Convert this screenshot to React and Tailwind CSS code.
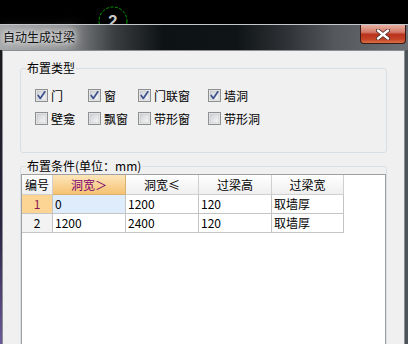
import React from "react";

const CJK = { fontFamily: '"Noto Sans CJK SC", "Noto Sans", sans-serif' };

function Check({ checked }) {
  return (
    <svg width="13" height="13" viewBox="0 0 13 13" className="shrink-0">
      <defs>
        <linearGradient id="cbg" x1="0" y1="0" x2="1" y2="1">
          <stop offset="0" stopColor="#cfd2d6" />
          <stop offset="1" stopColor="#f7f7f7" />
        </linearGradient>
      </defs>
      <rect x="0.5" y="0.5" width="12" height="12" fill="#f4f4f4" stroke="#8e8f8f" />
      <rect x="2" y="2" width="9" height="9" fill="url(#cbg)" stroke="#b8bbc0" strokeWidth="0.6" />
      {checked && (
        <path d="M3.2 6.4 L5.3 9.4 L9.8 2.8" fill="none" stroke="#3e4f8e" strokeWidth="1.7" strokeLinecap="round" strokeLinejoin="round" />
      )}
    </svg>
  );
}

function CB({ label, checked }) {
  return (
    <div className="flex items-center h-[13px]">
      <Check checked={checked} />
      <span className="ml-[3px] text-[12px] leading-[13px] text-black whitespace-nowrap" style={CJK}>
        {label}
      </span>
    </div>
  );
}

const headBase = "h-[20px] border-r border-b border-[#d0d0d0] flex items-center justify-center text-[12px] text-black bg-[linear-gradient(#ffffff,#efefef)]";
const cellBase = "h-[19px] border-r border-b border-[#c4c4c4] flex items-center text-[12px] text-black pl-[2px] whitespace-nowrap";

export default function App() {
  const rows = [
    ["1", "0", "1200", "120", "取墙厚"],
    ["2", "1200", "2400", "120", "取墙厚"],
  ];
  return (
    <div className="w-[408px] h-[344px] bg-black overflow-hidden flex flex-col" style={CJK}>
      <div className="h-[24px] shrink-0 flex">
        <svg width="140" height="24" viewBox="0 0 140 24">
          <circle cx="113" cy="21" r="14" fill="none" stroke="#00a000" strokeWidth="1" strokeDasharray="3 1.5" />
          <text x="108" y="27" fontSize="17" fill="#c8c8c8" fontFamily="Liberation Sans, sans-serif" fontWeight="bold">2</text>
        </svg>
      </div>
      <div className="flex-1 flex flex-col border-t border-[#c4c8cc] bg-[#2a2e33] min-h-0">
        <div className="h-[25px] shrink-0 flex justify-between items-start bg-[linear-gradient(to_right,#a4a6a8_0%,#8c8e90_16%,#3a3e40_28%,#0d1214_40%,#0f1416_58%,#2e3236_70%,#54585c_82%,#6c7074_100%)]">
          <span
            className="mt-[4px] ml-[3px] text-[12px] leading-[16px] text-[#101010] [text-shadow:0_0_4px_#f0f0f0,0_0_8px_#e0e0e0,0_0_12px_#d0d0d0,0_0_16px_#c8c8c8]"
            style={CJK}
          >
            自动生成过梁
          </span>
          <div className="mr-[2px] w-[46px] h-[19px] rounded-b-[4px] border border-t-0 border-[#3a1a14] flex items-center justify-center bg-[linear-gradient(#e9b0a2_0%,#d27a68_40%,#b8321c_52%,#c44426_80%,#dc7048_100%)]">
            <svg width="14" height="11" viewBox="0 0 14 11">
              <path d="M2 1.5 L12 9.5 M12 1.5 L2 9.5" stroke="#4a2a26" strokeWidth="4" strokeLinecap="round" />
              <path d="M2 1.5 L12 9.5 M12 1.5 L2 9.5" stroke="#ffffff" strokeWidth="2.4" strokeLinecap="round" />
            </svg>
          </div>
        </div>
        <div className="flex-1 flex min-h-0">
          <div className="w-[2px] shrink-0 bg-[linear-gradient(#1a1a1a,#2a2440_60%,#6a5a9a)]" />
          <div className="flex-1 bg-[#f0f0f0] border-t border-l border-r border-[#8a8e92] flex flex-col overflow-hidden">
            <div className="ml-[17px] mt-[17px] w-[367px] h-[85px] shrink-0 border border-[#d5dfe5] rounded-[3px] relative">
              <span className="absolute -top-[9px] left-[5px] px-[1px] bg-[#f0f0f0] text-[12px] leading-[16px] text-black">
                布置类型
              </span>
              <div className="pl-[14px] pt-[20px] grid grid-cols-[53px_50px_70px_auto] gap-y-[10px]">
                <CB label="门" checked />
                <CB label="窗" checked />
                <CB label="门联窗" checked />
                <CB label="墙洞" checked />
                <CB label="壁龛" />
                <CB label="飘窗" />
                <CB label="带形窗" />
                <CB label="带形洞" />
              </div>
            </div>
            <div className="ml-[17px] mt-[13px] w-[367px] h-[260px] shrink-0 border border-[#d5dfe5] rounded-[3px] relative pt-[7px]">
              <span className="absolute -top-[9px] left-[5px] px-[1px] bg-[#f0f0f0] text-[12px] leading-[16px] text-black whitespace-nowrap">
                布置条件(单位：mm)
              </span>
              <div className="w-[365px] h-[240px] bg-white border border-[#a0a0a0]">
                <div className="grid grid-cols-[31px_73px_73px_73px_72px]">
                  <div className={headBase}>编号</div>
                  <div className="h-[20px] border-r border-b border-[#d8b070] flex items-center justify-center text-[12px] text-[#800070] bg-[linear-gradient(#fde6bb,#f5c272)]">
                    洞宽＞
                  </div>
                  <div className={headBase}>洞宽≤</div>
                  <div className={headBase}>过梁高</div>
                  <div className={headBase}>过梁宽</div>
                  {rows.map((r, i) => (
                    <React.Fragment key={i}>
                      <div
                        className={
                          "h-[19px] border-r border-b border-[#c4c4c4] flex items-center justify-center text-[12px] " +
                          (i === 0 ? "bg-[#fcd594] text-[#8a1850]" : "bg-[#f3f3f3] text-black")
                        }
                      >
                        {r[0]}
                      </div>
                      <div className={cellBase + (i === 0 ? " bg-[#deecfc]" : "")}>{r[1]}</div>
                      <div className={cellBase}>{r[2]}</div>
                      <div className={cellBase}>{r[3]}</div>
                      <div className={cellBase}>{r[4]}</div>
                    </React.Fragment>
                  ))}
                </div>
              </div>
            </div>
          </div>
          <div className="w-[3px] shrink-0 bg-[#4c545a]" />
        </div>
      </div>
    </div>
  );
}
